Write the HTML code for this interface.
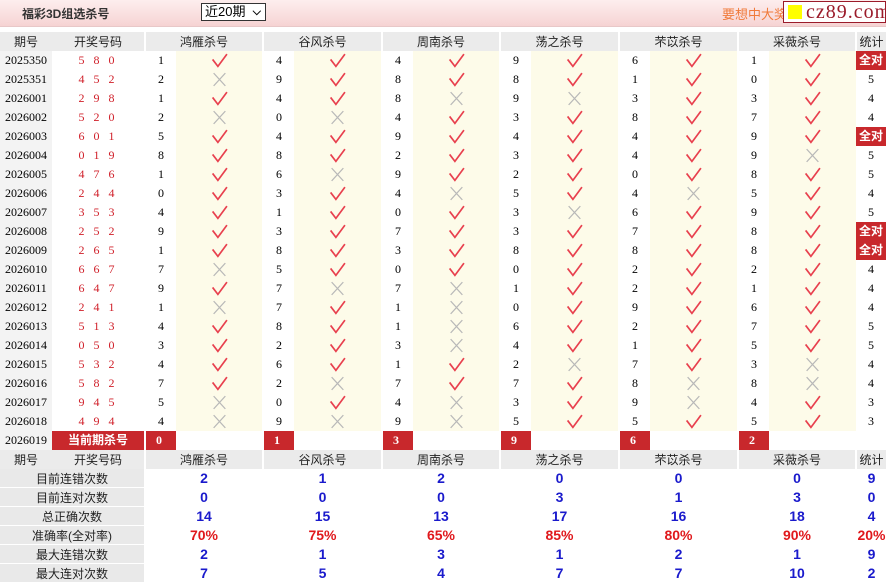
<!DOCTYPE html>
<html><head><meta charset="utf-8"><style>
*{margin:0;padding:0;box-sizing:border-box}
body{width:886px;height:585px;background:#fff;font-family:"Liberation Serif","Noto Serif CJK SC",serif;font-size:12px;color:#000;overflow:hidden;position:relative}
.top{position:absolute;left:0;top:0;width:886px;height:27px;background:linear-gradient(#fdeeee,#f6d3d3);border-bottom:1px solid #e8c8c8}
.ttl{position:absolute;left:22px;top:5px;font:bold 12px "Liberation Sans","Noto Sans CJK SC",sans-serif;color:#333}
.sel{position:absolute;left:201px;top:3px;width:65px;height:18px;border:1px solid #333;background:#fff;font:13px "Liberation Sans","Noto Sans CJK SC",sans-serif;padding-left:3px;line-height:16px}
.sel b{position:absolute;right:4px;top:0;font-size:11px}
.ad{position:absolute;left:722px;top:4px;font:13px "Liberation Sans","Noto Sans CJK SC",sans-serif;color:#f07a3a}
.logo{position:absolute;left:783px;top:1px;width:103px;height:22px;background:#fff;border:1px solid #9b1b2a;color:#9b1b2a;font:20px "Liberation Serif",serif;line-height:20px;padding-left:22px;letter-spacing:1px}
.logo i{position:absolute;left:4px;top:3px;width:14px;height:14px;background:#ff0}
table{position:absolute;left:0;top:32px;border-collapse:collapse;table-layout:fixed}
tr{height:19px}
td{height:19px;line-height:19px;padding:0;text-align:center;white-space:nowrap;font-size:12px;overflow:hidden}
.h td{background:#ebebeb;font-family:"Liberation Sans","Noto Sans CJK SC",sans-serif;color:#222;line-height:18px}
.g{border-left:2px solid #fff}
td.p{background:#f3f3f3}
td.k{color:#d0202a;letter-spacing:3px}
td.n{text-align:left;padding-left:12px;border-left:2px solid #fff}
td.m{background:#fdfbe9}
td.m svg{width:17px;height:15px;display:block;margin:0 auto}
.qd{background:#c8282c;color:#fff;font:bold 12px "Liberation Sans","Noto Sans CJK SC",sans-serif;line-height:19px}
.rb{background:#c8282c;color:#fff;font-weight:bold;text-align:left;padding-left:10px}
.st td{font:bold 14px "Liberation Sans",sans-serif;color:#1a1acc;line-height:19px}
.st td.l{background:#e9e9e9;font:12px "Liberation Sans","Noto Sans CJK SC",sans-serif;color:#222;line-height:18px;box-shadow:inset 0 -1px 0 #fff}
.st.r td{color:#e0181c}
.st.r td.l{color:#222}
</style></head><body>
<svg width="0" height="0" style="position:absolute"><defs>
<symbol id="v" viewBox="0 0 16 14"><path d="M1.5 6 L6.5 12.5 L15 1" fill="none" stroke="#e8404e" stroke-width="1.6"/></symbol>
<symbol id="x" viewBox="0 0 16 14"><path d="M2.5 1 L13.5 13 M13.5 1 L2.5 13" fill="none" stroke="#b8b8b8" stroke-width="1.2"/></symbol>
</defs></svg>
<div class="top"><div class="ttl">福彩3D组选杀号</div><div class="sel">近20期<b>⌵</b></div><div class="ad">要想中大奖</div><div class="logo"><i></i>cz89.com</div></div>
<table id="t">
<colgroup><col style="width:52px"><col style="width:93px">
<col style="width:31px"><col style="width:87px"><col style="width:31px"><col style="width:88px"><col style="width:31px"><col style="width:87px"><col style="width:31px"><col style="width:88px"><col style="width:31px"><col style="width:88px"><col style="width:31px"><col style="width:87px"><col style="width:30px"></colgroup>
<tbody id="b">
<tr class="h"><td>期号</td><td>开奖号码</td><td colspan="2" class="g">鸿雁杀号</td><td colspan="2" class="g">谷风杀号</td><td colspan="2" class="g">周南杀号</td><td colspan="2" class="g">荡之杀号</td><td colspan="2" class="g">芣苡杀号</td><td colspan="2" class="g">采薇杀号</td><td class="g">统计</td></tr>
</tbody></table>
<script>
var D=[["2025350","580","1v4v4v9v6v1v","全对"],["2025351","452","2x9v8v8v1v0v","5"],["2026001","298","1v4v8x9x3v3v","4"],["2026002","520","2x0x4v3v8v7v","4"],["2026003","601","5v4v9v4v4v9v","全对"],["2026004","019","8v8v2v3v4v9x","5"],["2026005","476","1v6x9v2v0v8v","5"],["2026006","244","0v3v4x5v4x5v","4"],["2026007","353","4v1v0v3x6v9v","5"],["2026008","252","9v3v7v3v7v8v","全对"],["2026009","265","1v8v3v8v8v8v","全对"],["2026010","667","7x5v0v0v2v2v","4"],["2026011","647","9v7x7x1v2v1v","4"],["2026012","241","1x7v1x0v9v6v","4"],["2026013","513","4v8v1x6v2v7v","5"],["2026014","050","3v2v3x4v1v5v","5"],["2026015","532","4v6v1v2x7v3x","4"],["2026016","582","7v2x7v7v8x8x","4"],["2026017","945","5x0v4x3v9x4v","3"],["2026018","494","4x9x9x5v5v5v","3"]];
var h="";
D.forEach(function(r){h+='<tr><td class="p">'+r[0]+'</td><td class="k">'+r[1].split("").join(" ")+'</td>';
for(var i=0;i<6;i++){h+='<td class="n">'+r[2][i*2]+'</td><td class="m"><svg><use href="#'+r[2][i*2+1]+'"/></svg></td>';}
h+=r[3]=="全对"?'<td class="qd">全对</td>':'<td>'+r[3]+'</td>';h+='</tr>';});
h+='<tr><td class="p">2026019</td><td class="qd">当前期杀号</td>';
[0,1,3,9,6,2].forEach(function(n){h+='<td class="rb g">'+n+'</td><td></td>';});h+='<td></td></tr>';
h+='<tr class="h"><td>期号</td><td>开奖号码</td><td colspan="2" class="g">鸿雁杀号</td><td colspan="2" class="g">谷风杀号</td><td colspan="2" class="g">周南杀号</td><td colspan="2" class="g">荡之杀号</td><td colspan="2" class="g">芣苡杀号</td><td colspan="2" class="g">采薇杀号</td><td class="g">统计</td></tr>';
var S=[["目前连错次数","2120009",0],["目前连对次数","0003130",0],["总正确次数",["14","15","13","17","16","18","4"],0],["准确率(全对率)",["70%","75%","65%","85%","80%","90%","20%"],1],["最大连错次数","2131219",0],["最大连对次数",["7","5","4","7","7","10","2"],0]];
S.forEach(function(s){h+='<tr class="st'+(s[2]?' r':'')+'"><td colspan="2" class="l">'+s[0]+'</td>';var v=typeof s[1]=="string"?s[1].split(""):s[1];
for(var i=0;i<6;i++)h+='<td colspan="2" class="g">'+v[i]+'</td>';h+='<td class="g">'+v[6]+'</td></tr>';});
document.getElementById("b").insertAdjacentHTML("beforeend",h);
</script>
</body></html>
